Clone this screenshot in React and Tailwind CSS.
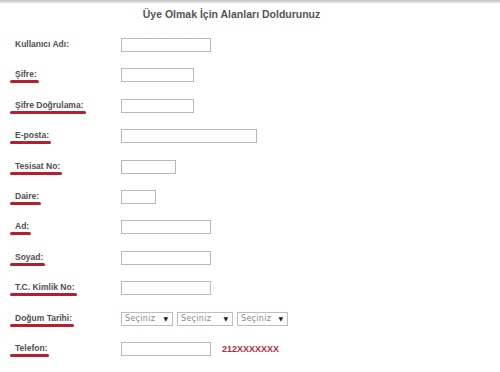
const fields = [
  { label: 'Kullanıcı Adı:', width: 'w-[90px]', mark: false },
  { label: 'Şifre:', width: 'w-[73px]', mark: true },
  { label: 'Şifre Doğrulama:', width: 'w-[73px]', mark: true },
  { label: 'E-posta:', width: 'w-[136px]', mark: true },
  { label: 'Tesisat No:', width: 'w-[55px]', mark: true },
  { label: 'Daire:', width: 'w-[35px]', mark: true },
  { label: 'Ad:', width: 'w-[90px]', mark: true },
  { label: 'Soyad:', width: 'w-[90px]', mark: true },
  { label: 'T.C. Kimlik No:', width: 'w-[90px]', mark: true },
  { label: 'Doğum Tarihi:', select: true, mark: true },
  { label: 'Telefon:', width: 'w-[90px]', mark: true, hint: '212XXXXXXX' },
];

function Label({ text, mark }) {
  return (
    <div className="flex flex-col pt-[1px]">
      <span className="text-[8.5px] leading-[10px] font-bold text-[#505050] whitespace-nowrap">{text}</span>
      {mark && <span className="h-[3px] mt-[1px] -ml-[5px] -mr-[2px] rounded-full bg-[#b3202f]" />}
    </div>
  );
}

function Select({ width }) {
  return (
    <div
      className={`${width} h-[14px] border border-[#bdbdbd] bg-white flex items-center justify-between pl-[3px] pr-[4px] leading-[12px] font-['DejaVu_Sans',sans-serif]`}
    >
      <span className="text-[8px] text-[#8a8a8a] tracking-[0.3px]">Seçiniz</span>
      <span className="text-[6px] text-[#222]">▼</span>
    </div>
  );
}

export default function App() {
  return (
    <div className="w-[500px] h-[372px] bg-white overflow-hidden font-['Liberation_Sans',Arial,sans-serif]">
      <div className="h-[3px] bg-gradient-to-b from-[#c6c6c6] to-[#e6e6e6]" />
      <div className="w-[463px] mt-[5px] text-center text-[10.5px] leading-[12px] font-bold text-[#555]">
        Üye Olmak İçin Alanları Doldurunuz
      </div>

      <div className="mt-[18px]">
        {fields.map(f => (
          <div key={f.label} className="h-[30.4px] flex items-start">
            <div className="w-[121px] pl-[15px] flex">
              <Label text={f.label} mark={f.mark} />
            </div>
            {f.select ? (
              <div className="flex gap-[4px]">
                <Select width="w-[52px]" />
                <Select width="w-[56px]" />
                <Select width="w-[51px]" />
              </div>
            ) : (
              <div className="flex items-center">
                <div className={`${f.width} h-[14px] border border-[#b8b8b8] bg-white`} />
                {f.hint && (
                  <span className="ml-[11px] text-[9px] leading-[14px] font-bold text-[#b8263a]">{f.hint}</span>
                )}
              </div>
            )}
          </div>
        ))}
      </div>
    </div>
  );
}
